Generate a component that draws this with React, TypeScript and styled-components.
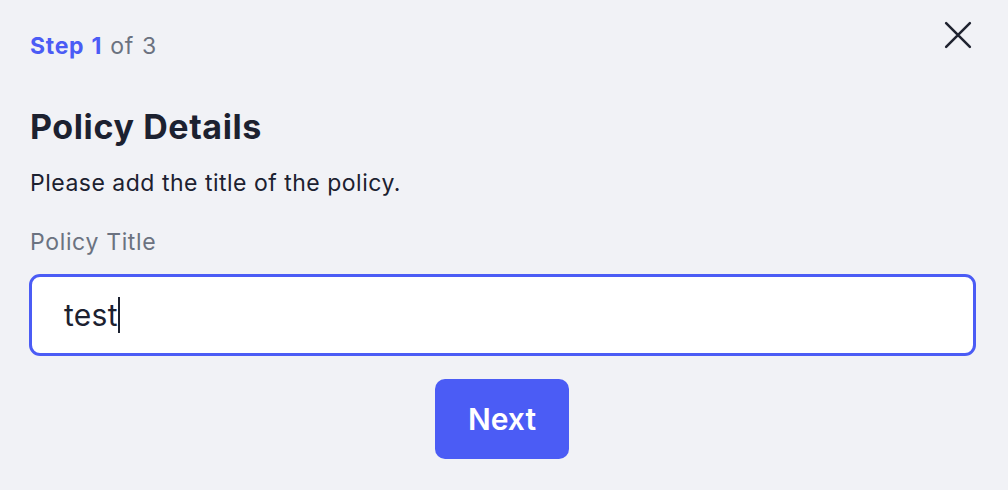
import React from "react";
import styled, { createGlobalStyle } from "styled-components";

const Global = createGlobalStyle`
  html, body { margin: 0; padding: 0; background: #f1f2f6; }
  body { font-family: Inter, "Noto Sans", sans-serif; -webkit-font-smoothing: antialiased; }
  * { box-sizing: border-box; }
`;

const Panel = styled.div`
  width: 1008px;
  height: 490px;
  background: #f1f2f6;
  padding: 0 32px 0 30px;
  display: flex;
  flex-direction: column;
  position: relative;
`;

const Header = styled.div`
  display: flex;
  justify-content: space-between;
  align-items: center;
  padding-top: 32px;
`;

const StepText = styled.div`
  font-size: 23px;
  letter-spacing: 0.7px;
  word-spacing: 1px;
  color: #6b7280;
  line-height: 28px;
  b { color: #4b5cf5; font-weight: 700; }
`;

const CloseButton = styled.button`
  position: absolute;
  top: 20px;
  right: 35px;
  width: 30px;
  height: 30px;
  border: none;
  background: transparent;
  padding: 0;
  display: flex;
  align-items: center;
  justify-content: center;
  color: #1f2330;
  cursor: pointer;
`;

const Title = styled.h1`
  margin: 47px 0 0;
  font-size: 34px;
  letter-spacing: 0.6px;
  line-height: 40px;
  font-weight: 700;
  color: #1c2130;
`;

const Description = styled.p`
  margin: 21px 0 0;
  font-size: 23px;
  letter-spacing: 0.5px;
  line-height: 30px;
  color: #1c2130;
`;

const Label = styled.label`
  margin-top: 29px;
  font-size: 23px;
  letter-spacing: 0.65px;
  line-height: 30px;
  color: #6b7280;
`;

const InputBox = styled.div`
  margin-top: 17px;
  width: 947px;
  margin-left: -1px;
  height: 82px;
  border: 3px solid #4b5cf5;
  border-radius: 11px;
  background: #ffffff;
  display: flex;
  align-items: center;
  padding-left: 32px;
  font-size: 30px;
  letter-spacing: 0.3px;
  color: #1c2130;
`;

const Caret = styled.span`
  display: inline-block;
  width: 2px;
  height: 36px;
  background: #1c2130;
`;

const Actions = styled.div`
  display: flex;
  justify-content: center;
  margin-top: 23px;
  margin-left: -2px;
`;

const NextButton = styled.button`
  width: 134px;
  height: 80px;
  border: none;
  border-radius: 10px;
  background: #4b5cf5;
  color: #ffffff;
  font-family: Inter, "Noto Sans", sans-serif;
  font-size: 30px;
  font-weight: 600;
  cursor: pointer;
`;

export default function App() {
  return (
    <>
      <Global />
      <Panel>
        <Header>
          <StepText>
            <b>Step 1</b> of 3
          </StepText>
        </Header>
        <CloseButton aria-label="Close">
          <svg width="30" height="30" viewBox="0 0 24 24" fill="none" stroke="currentColor" strokeWidth="2" strokeLinecap="round">
            <path d="M2.5 2.5L21.5 21.5M21.5 2.5L2.5 21.5" />
          </svg>
        </CloseButton>
        <Title>Policy Details</Title>
        <Description>Please add the title of the policy.</Description>
        <Label>Policy Title</Label>
        <InputBox>
          <span>test</span>
          <Caret />
        </InputBox>
        <Actions>
          <NextButton>Next</NextButton>
        </Actions>
      </Panel>
    </>
  );
}
